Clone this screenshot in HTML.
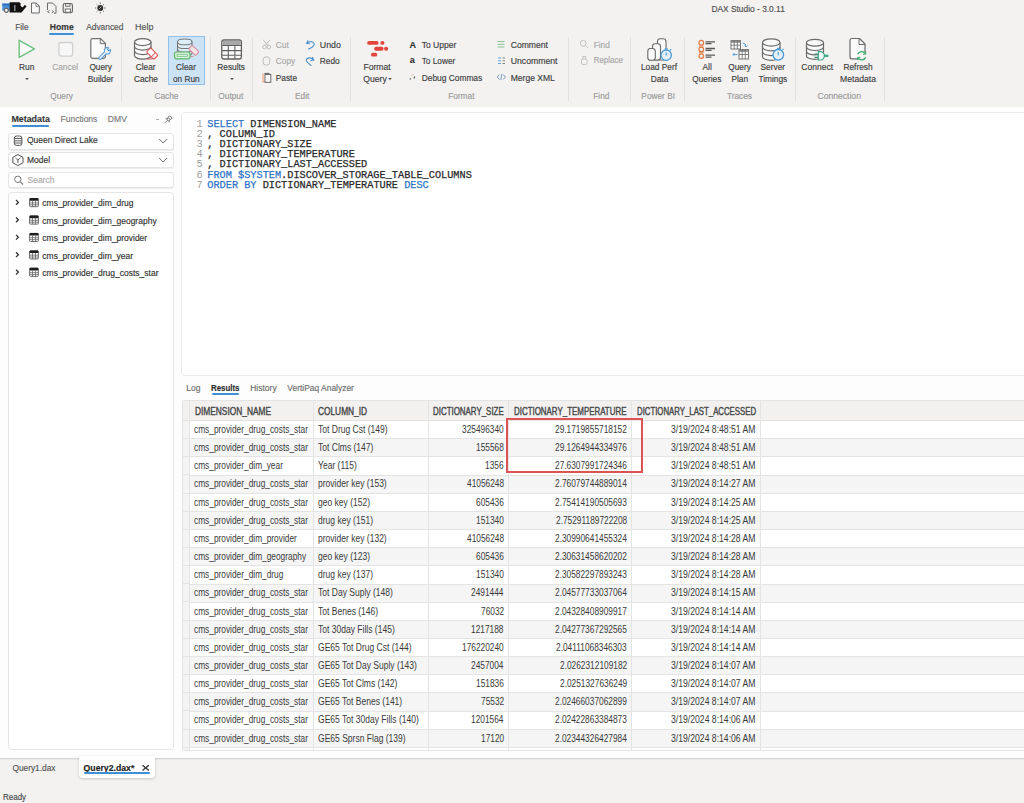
<!DOCTYPE html><html><head><meta charset="utf-8"><style>
*{margin:0;padding:0;box-sizing:border-box}
html,body{width:1024px;height:803px;overflow:hidden}
body{position:relative;background:#f3f2f1;font-family:"Liberation Sans",sans-serif;color:#3b3b3b;font-size:8.3px}
.a{position:absolute}
.t{position:absolute;white-space:nowrap;line-height:12px;font-size:8.3px;color:#404040;transform:scaleY(1.07);transform-origin:50% 50%;-webkit-text-stroke:0.15px currentColor}
.c{text-align:center}
.dis{color:#a8a8a8}
.grp{color:#9a9a9a}
.sep{position:absolute;width:1px;background:#e2e1e0;top:37px;height:64px}
svg{position:absolute;overflow:visible}
.code{position:absolute;font-family:"Liberation Mono",monospace;font-size:10.25px;-webkit-text-stroke:0.25px currentColor;line-height:10.17px;white-space:pre;color:#2a2a2a}
.ln{color:#a0a0a0;-webkit-text-stroke:0}
.kw{color:#3174c6}
.g{position:absolute;white-space:nowrap;font-size:8.3px;line-height:12px;color:#3a3a3a}
.r{text-align:right}
</style></head><body><div id="w" style="position:absolute;left:0;top:0;width:1024px;height:803px">
<svg style="left:0;top:0" width="110" height="16" viewBox="0 0 110 16">
<rect x="2.3" y="3.6" width="7.5" height="7" fill="#4a90d9"/>
<rect x="2.3" y="3.6" width="7.5" height="2" fill="#2f6fc0"/>
<circle cx="6.3" cy="10.3" r="2" fill="#fff" stroke="#666" stroke-width="1.2"/>
<path d="M9.6 2.3 H19.5 L20.5 3.5 V12.5 H9.6 Z" fill="#111"/>
<rect x="14.2" y="5" width="1.2" height="6" fill="#aaa"/>
<path d="M20 5.5 L22.5 7.5 L25 4.8 L26.5 6.5 L24 9.5 L21.5 12.5 L20 12.5 Z" fill="#111"/>
<path d="M31.5 3 H36.3 L39.3 6 V13 H31.5 Z" fill="#f7f7f7" stroke="#6b6b6b" stroke-width="1"/>
<path d="M36 3 V6.3 H39.3" fill="none" stroke="#6b6b6b" stroke-width="0.8"/>
<path d="M47.5 10 V3 H52.5 L56 6.5 V13.2 H54" fill="none" stroke="#6b6b6b" stroke-width="1"/>
<path d="M49.5 10.5 L47.5 11.8 L49.5 13 M51.8 10.5 L53.7 11.8 L51.8 13" fill="none" stroke="#6b6b6b" stroke-width="0.9"/>
<rect x="63.2" y="3.5" width="9.2" height="9.2" rx="1.8" fill="none" stroke="#5f5f5f" stroke-width="1.1"/>
<rect x="65.7" y="3.6" width="4.3" height="2.6" fill="none" stroke="#5f5f5f" stroke-width="0.9"/>
<rect x="65.2" y="9" width="5.2" height="3.2" fill="#fff" stroke="#5f5f5f" stroke-width="0.9"/>
<circle cx="100.3" cy="8" r="2.9" fill="#2b2b2b"/>
<path d="M99.2 8.8 L101.3 6.8" stroke="#eee" stroke-width="0.8"/>
<g stroke="#555" stroke-width="0.9">
<path d="M100.3 2.6 V4 M100.3 12 V13.4 M95 8 H96.4 M104.2 8 H105.6 M96.6 4.3 L97.5 5.2 M103.1 10.8 L104 11.7 M96.6 11.7 L97.5 10.8 M103.1 5.2 L104 4.3"/>
</g>
</svg>
<div class="t " style="left:711.4px;top:3.3px;color:#505050;font-size:8.4px">DAX Studio - 3.0.11</div>
<div class="t " style="left:15.2px;top:21.1px;color:#555">File</div>
<div class="t " style="left:49.8px;top:21.1px;font-weight:bold;color:#363636;font-size:8.6px">Home</div>
<div class="a" style="left:49.3px;top:32.6px;width:25px;height:2.4px;background:#3d8fd6;border-radius:1px"></div>
<div class="t " style="left:86.2px;top:21.1px;color:#555;font-size:8.4px">Advanced</div>
<div class="t " style="left:135px;top:21.1px;color:#555;font-size:9px">Help</div>
<div class="sep" style="left:121px"></div>
<div class="sep" style="left:210.3px"></div>
<div class="sep" style="left:252px"></div>
<div class="sep" style="left:350.2px"></div>
<div class="sep" style="left:568px"></div>
<div class="sep" style="left:630px"></div>
<div class="sep" style="left:684px"></div>
<div class="sep" style="left:795px"></div>
<div class="sep" style="left:883.5px"></div>
<svg style="left:0;top:0" width="1" height="1">
<path d="M19.2 40.3 L34.5 48.8 L19.2 57.3 Z" fill="#fafafa" stroke="#6cc07b" stroke-width="1.4" stroke-linejoin="round"/>
<rect x="59" y="42.5" width="13.6" height="13.6" rx="2" fill="#f7f7f7" stroke="#cfcfcf" stroke-width="1.3"/>
<path d="M92.6 38.6 H100.6 L105.4 43.4 V56.6 A1.8 1.8 0 0 1 103.6 58.4 H92.6 A1.8 1.8 0 0 1 90.8 56.6 V40.4 A1.8 1.8 0 0 1 92.6 38.6 Z" fill="#fbfbfb" stroke="#707070" stroke-width="1.2" stroke-linejoin="round"/>
<path d="M100.3 38.8 V43.6 H105.2" fill="none" stroke="#707070" stroke-width="1"/>
<g transform="translate(107.5 50.7) rotate(45)">
<path d="M-1.3 10.5 V2.92 A3.2 3.2 0 0 1 -1.1 -3.0 V-0.8 H1.1 V-3.0 A3.2 3.2 0 0 1 1.3 2.92 V10.5 A1.3 1.3 0 0 1 -1.3 10.5 Z" fill="#e6f1fb" stroke="#5598d8" stroke-width="0.95" stroke-linejoin="round"/>
</g>
</svg>
<div class="t c " style="left:-13.3px;width:80px;top:61.4px;">Run</div>
<div class="a" style="left:24.8px;top:78.3px;width:0;height:0;border-left:2px solid transparent;border-right:2px solid transparent;border-top:2.4px solid #555"></div>
<div class="t c dis" style="left:25.2px;width:80px;top:61.4px;">Cancel</div>
<div class="t c " style="left:60.7px;width:80px;top:61.4px;">Query</div>
<div class="t c " style="left:60.7px;width:80px;top:73.0px;">Builder</div>
<div class="t c grp" style="left:21.5px;width:80px;top:90.0px;">Query</div>
<div class="a" style="left:168px;top:35.7px;width:37px;height:49.7px;background:#cce3f6;border:1px solid #8fc1ec"></div>
<svg style="left:0;top:0" width="1" height="1"><g fill="#fafafa" stroke="#6a6a6a" stroke-width="1.2">
<path d="M134.5 42.085 V55.615 A8.25 3.4850000000000003 0 0 0 151.0 55.615 V42.085"/>
<ellipse cx="142.75" cy="42.085" rx="8.25" ry="3.4850000000000003"/>
<path d="M134.5 46.595 A8.25 3.4850000000000003 0 0 0 151.0 46.595 M134.5 51.105000000000004 A8.25 3.4850000000000003 0 0 0 151.0 51.105000000000004" fill="none"/>
</g><g transform="translate(152.2 53.6) rotate(-45)"><rect x="-3" y="-5.2" width="6" height="10.4" rx="1.2" fill="#fff" stroke="#e0585a" stroke-width="1.2"/><path d="M-3 1.6 H3" stroke="#e0585a" stroke-width="1"/></g><path d="M147 59 H152" stroke="#e0585a" stroke-width="1"/><g fill="#dfeefb" stroke="#7a7a7a" stroke-width="1.1">
<path d="M177.5 41.89 V53.11 A7.25 2.89 0 0 0 192.0 53.11 V41.89"/>
<ellipse cx="184.75" cy="41.89" rx="7.25" ry="2.89"/>
<path d="M177.5 45.63 A7.25 2.89 0 0 0 192.0 45.63 M177.5 49.37 A7.25 2.89 0 0 0 192.0 49.37" fill="none"/>
</g><g transform="translate(193.8 50.3) rotate(-45)"><rect x="-2.6" y="-4.8" width="5.2" height="9.6" rx="1" fill="#f4e4e8" stroke="#d98896" stroke-width="1"/></g>
<path d="M189 56.5 H193.5" stroke="#d98896" stroke-width="0.9"/>
<rect x="174.5" y="52" width="15.5" height="6.8" rx="2" fill="#d8f0dc" stroke="#5bb56a" stroke-width="1.2"/>
<rect x="177" y="54.2" width="10.5" height="2.4" fill="none" stroke="#5bb56a" stroke-width="0.6"/>
</svg>
<div class="t c " style="left:105.7px;width:80px;top:61.4px;">Clear</div>
<div class="t c " style="left:106.0px;width:80px;top:73.0px;">Cache</div>
<div class="t c " style="left:146.0px;width:80px;top:61.4px;">Clear</div>
<div class="t c " style="left:146.3px;width:80px;top:73.0px;">on Run</div>
<div class="t c grp" style="left:126.5px;width:80px;top:90.0px;">Cache</div>
<svg style="left:0;top:0" width="1" height="1">
<rect x="221.8" y="40" width="19.6" height="19" rx="2.2" fill="#fafafa" stroke="#626262" stroke-width="1.3"/>
<rect x="222.5" y="40.7" width="18.2" height="4.5" fill="#a8a8a8"/>
<path d="M221.8 45.5 H241.4 M221.8 50.6 H241.4 M221.8 55.3 H241.4 M228.3 45.5 V59 M234.9 45.5 V59" stroke="#626262" stroke-width="1.1" fill="none"/>
</svg>
<div class="t c " style="left:191.2px;width:80px;top:61.4px;">Results</div>
<div class="a" style="left:229.5px;top:78.3px;width:0;height:0;border-left:2px solid transparent;border-right:2px solid transparent;border-top:2.4px solid #555"></div>
<div class="t c grp" style="left:190.8px;width:80px;top:90.0px;">Output</div>
<svg style="left:0;top:0" width="1" height="1">
<g stroke="#bdbdbd" stroke-width="1" fill="none">
<circle cx="264.5" cy="47" r="1.8"/><circle cx="268.8" cy="47" r="1.8"/>
<path d="M263.2 39.8 L268 45.5 M270 39.8 L265.3 45.5"/>
<rect x="263.2" y="57" width="6.5" height="8" rx="2.5"/>
</g>
<path d="M263 73.5 V82 H270.5" fill="none" stroke="#f0a070" stroke-width="1.1"/>
<rect x="265" y="74.5" width="5.8" height="7.8" fill="#fafafa" stroke="#6a6a6a" stroke-width="1"/>
<path d="M264.5 73.5 H269.5" stroke="#6a6a6a" stroke-width="1.2"/>
<path d="M308 40.8 L306.5 43.3 L309.5 43.8 M306.8 43.2 C311 40 315.5 42.5 313.8 45.5 C312.8 47.2 310.5 48.3 308.5 49" fill="none" stroke="#4a90d0" stroke-width="1.1" stroke-linecap="round"/>
<path d="M312.5 57.5 L313.8 60 L310.8 60.5 M313.5 60 C310 56 304.5 58.5 306.8 61.5 C308 63 309.5 64.5 311 65.5" fill="none" stroke="#4a90d0" stroke-width="1.1" stroke-linecap="round"/>
</svg>
<div class="t dis" style="left:275.8px;top:38.6px;">Cut</div>
<div class="t dis" style="left:275.8px;top:55.1px;">Copy</div>
<div class="t " style="left:275.8px;top:71.5px;">Paste</div>
<div class="t " style="left:319.8px;top:38.6px;font-size:8.8px">Undo</div>
<div class="t " style="left:319.8px;top:55.1px;">Redo</div>
<div class="t c grp" style="left:262.2px;width:80px;top:90.0px;">Edit</div>
<svg style="left:0;top:0" width="1" height="1">
<g stroke="#e2453c" stroke-width="3.9" stroke-linecap="round" fill="none">
<path d="M369.1 42.9 H376.6"/><path d="M382.3 42.9 H382.5"/>
<path d="M376.1 48.7 H381.6"/><path d="M386 48.7 H386.2"/>
<path d="M372.9 54.65 H375.3"/>
</g>
</svg>
<div class="t c " style="left:337.0px;width:80px;top:61.4px;font-size:8.6px">Format</div>
<div class="t " style="left:363.3px;top:73.0px;font-size:8.6px">Query</div>
<div class="a" style="left:388.3px;top:78.3px;width:0;height:0;border-left:2px solid transparent;border-right:2px solid transparent;border-top:2.6px solid #555"></div>
<div class="t " style="left:409.5px;top:38.6px;font-weight:bold;color:#333;font-size:9px">A</div>
<div class="t " style="left:409.8px;top:54.1px;font-weight:bold;color:#333;font-size:9px">a</div>
<svg style="left:0;top:0" width="1" height="1">
<path d="M410 79.5 L410.6 78.2 M414 78.5 L414.8 76.5" stroke="#555" stroke-width="1.1"/>
<path d="M412 75.5 L413 74.5" stroke="#d08030" stroke-width="0.9"/>
</svg>
<div class="t " style="left:421.7px;top:38.6px;font-size:8.55px">To Upper</div>
<div class="t " style="left:421.7px;top:55.1px;font-size:8.3px">To Lower</div>
<div class="t " style="left:421.7px;top:71.5px;font-size:8.4px">Debug Commas</div>
<div class="t c grp" style="left:421.3px;width:80px;top:90.0px;">Format</div>
<svg style="left:0;top:0" width="1" height="1">
<g stroke-width="0.9" fill="none">
<path d="M497.5 41.5 H504.5 M497.5 44.3 H504.5 M497.5 47 H504.5" stroke="#7dbb85"/>
<path d="M498 58 L501 58 M498 60.8 H501 M498 63.5 L501 63.5" stroke="#5a9ad8"/>
<path d="M502.5 58 H505 M502.5 60.8 H505 M502.5 63.5 H505" stroke="#777"/>
<path d="M499.5 74.5 L497.3 77 L499.5 79.5 M503.2 74.5 L505.4 77 L503.2 79.5 M501.8 74 L500.8 80" stroke="#6a8fb8"/>
</g>
</svg>
<div class="t " style="left:510.7px;top:38.6px;font-size:8.6px">Comment</div>
<div class="t " style="left:510.7px;top:55.1px;font-size:8.7px">Uncomment</div>
<div class="t " style="left:510.7px;top:71.5px;font-size:8.55px">Merge XML</div>
<svg style="left:0;top:0" width="1" height="1">
<g stroke="#c2c2c2" stroke-width="1" fill="none">
<circle cx="583.2" cy="43.3" r="2.9"/><path d="M585.3 45.4 L588 48.1"/>
<rect x="581.5" y="59" width="5.5" height="5.5" rx="1.5"/><path d="M582.8 59 V56.5 H585.7 V59"/>
</g>
</svg>
<div class="t dis" style="left:593.7px;top:38.6px;">Find</div>
<div class="t dis" style="left:593.7px;top:55.1px;font-size:7.95px">Replace</div>
<div class="t c grp" style="left:561.3px;width:80px;top:90.0px;">Find</div>
<svg style="left:0;top:0" width="1" height="1">
<g fill="#fafafa" stroke="#6a6a6a" stroke-width="1.1">
<rect x="657.5" y="38.7" width="8.5" height="21.3" rx="2.8"/>
<rect x="652.5" y="43.8" width="8" height="16.3" rx="2.8"/>
<rect x="647.8" y="48.5" width="7.5" height="11.8" rx="2.8"/>
</g>
<circle cx="666.2" cy="55.2" r="5.2" fill="#e3f0fb" stroke="#4b9ad9" stroke-width="1.3"/>
<path d="M666.2 52.5 V55.5" stroke="#4b9ad9" stroke-width="1.1"/>
<path d="M664.8 48.9 H667.6 M670.2 50.3 L671.3 49.2" stroke="#4b9ad9" stroke-width="1.1"/>
</svg>
<div class="t c " style="left:619.0px;width:80px;top:61.4px;">Load Perf</div>
<div class="t c " style="left:619.5px;width:80px;top:73.0px;">Data</div>
<div class="t c grp" style="left:618.2px;width:80px;top:90.0px;">Power BI</div>
<svg style="left:0;top:0" width="1" height="1">
<g fill="none" stroke="#e07b45" stroke-width="1.2">
<circle cx="701.3" cy="42.7" r="2.3"/><circle cx="701.3" cy="49.4" r="2.3"/><circle cx="701.3" cy="56.1" r="2.3"/>
<path d="M699 46 H703.6 M699 52.7 H703.6" stroke-width="0.9"/>
</g>
<g stroke="#5a5a5a" stroke-width="1.3">
<path d="M705.5 41.8 H715 M705.5 43.7 H711.5 M705.5 48.5 H715 M705.5 50.4 H711.5 M705.5 55.2 H715 M705.5 57.1 H711.5"/>
</g>
<g fill="#fafafa" stroke="#6a6a6a" stroke-width="0.9">
<rect x="731" y="40.5" width="9.5" height="8.5"/>
<rect x="739" y="49.5" width="9.5" height="9.5"/>
</g>
<rect x="731" y="40.5" width="9.5" height="2.3" fill="#8a8a8a"/>
<rect x="739" y="49.5" width="9.5" height="2.3" fill="#8a8a8a"/>
<path d="M731 45.2 H740.5 M734.2 40.5 V49 M737.3 40.5 V49 M739 54.5 H748.5 M742.2 49.5 V59 M745.3 49.5 V59" stroke="#6a6a6a" stroke-width="0.8"/>
<path d="M742.5 43 Q746 43 746 46.5 M744.5 45.5 L746 47 L747.5 45.5" fill="none" stroke="#4b9ad9" stroke-width="0.9"/>
<path d="M737.5 54.5 H733 M734.5 53 L733 54.5 L734.5 56" fill="none" stroke="#4b9ad9" stroke-width="0.9"/>
</svg>
<div class="t c " style="left:667.2px;width:80px;top:61.4px;">All</div>
<div class="t c " style="left:666.8px;width:80px;top:73.0px;">Queries</div>
<div class="t c " style="left:699.6px;width:80px;top:61.4px;">Query</div>
<div class="t c " style="left:699.8px;width:80px;top:73.0px;">Plan</div>
<svg style="left:0;top:0" width="1" height="1"><g fill="#fafafa" stroke="#6a6a6a" stroke-width="1.2">
<path d="M762.5 42.455 V56.644999999999996 A8.75 3.6550000000000002 0 0 0 780.0 56.644999999999996 V42.455"/>
<ellipse cx="771.25" cy="42.455" rx="8.75" ry="3.6550000000000002"/>
<path d="M762.5 47.184999999999995 A8.75 3.6550000000000002 0 0 0 780.0 47.184999999999995 M762.5 51.915 A8.75 3.6550000000000002 0 0 0 780.0 51.915" fill="none"/>
</g>
<circle cx="778.3" cy="54.8" r="5.3" fill="#e3f0fb" stroke="#4b9ad9" stroke-width="1.3"/>
<path d="M778.3 52 V55.2" stroke="#4b9ad9" stroke-width="1.1"/>
<path d="M776.9 48.4 H779.7 M782.4 49.9 L783.5 48.8" stroke="#4b9ad9" stroke-width="1.1"/>
</svg>
<div class="t c " style="left:732.8px;width:80px;top:61.4px;">Server</div>
<div class="t c " style="left:732.8px;width:80px;top:73.0px;">Timings</div>
<div class="t c grp" style="left:699.5px;width:80px;top:90.0px;">Traces</div>
<svg style="left:0;top:0" width="1" height="1"><g fill="#fafafa" stroke="#6a6a6a" stroke-width="1.2">
<path d="M806.5 42.699999999999996 V55.89999999999999 A8.5 3.4000000000000004 0 0 0 823.5 55.89999999999999 V42.699999999999996"/>
<ellipse cx="815.0" cy="42.699999999999996" rx="8.5" ry="3.4000000000000004"/>
<path d="M806.5 47.099999999999994 A8.5 3.4000000000000004 0 0 0 823.5 47.099999999999994 M806.5 51.5 A8.5 3.4000000000000004 0 0 0 823.5 51.5" fill="none"/>
</g>
<path d="M823.5 55.8 H828.4" stroke="#3aa98a" stroke-width="2.3"/>
<path d="M818.3 51.6 H820.2 A4.2 4.2 0 0 1 820.2 60 H818.3 Z" fill="#eef8f4" stroke="#3aa98a" stroke-width="1.2"/>
<path d="M814.3 54.2 H818.3 M814.3 57.4 H818.3" stroke="#3d8f73" stroke-width="1.3"/>
<path d="M852 38.5 H859.5 L865 44 V56.8 A2 2 0 0 1 863 58.8 H852 A2 2 0 0 1 850 56.8 V40.5 A2 2 0 0 1 852 38.5 Z" fill="#fafafa" stroke="#6a6a6a" stroke-width="1.2" stroke-linejoin="round"/>
<path d="M859 38.5 V44.5 H865" fill="none" stroke="#6a6a6a" stroke-width="1"/>
<circle cx="861.7" cy="55.8" r="4.3" fill="#fafafa" stroke="none"/>
<path d="M857.8 54.3 A4 4 0 0 1 865 53.5 M865.6 57.3 A4 4 0 0 1 858.4 58" fill="none" stroke="#3aab6a" stroke-width="1.3"/>
<path d="M865.7 51.5 V54.2 H863" fill="none" stroke="#3aab6a" stroke-width="1"/>
<path d="M857.7 60 V57.3 H860.4" fill="none" stroke="#3aab6a" stroke-width="1"/>
</svg>
<div class="t c " style="left:777.2px;width:80px;top:61.4px;font-size:8.5px">Connect</div>
<div class="t c " style="left:818.0px;width:80px;top:61.4px;">Refresh</div>
<div class="t c " style="left:818.0px;width:80px;top:73.0px;font-size:8.6px">Metadata</div>
<div class="t c grp" style="left:799.2px;width:80px;top:90.0px;font-size:8.6px">Connection</div>
<div class="a" style="left:0;top:106.4px;width:1024px;height:651.4px;background:#fdfdfd;box-shadow:0 1px 1.5px rgba(0,0,0,0.16)"></div>
<div class="a" style="left:0;top:106.4px;width:1024px;height:1.5px;background:linear-gradient(#f1f0ef,#fdfdfd)"></div>
<div class="t " style="left:11.4px;top:113.0px;font-weight:bold;color:#3a3a3a;font-size:8.9px">Metadata</div>
<div class="a" style="left:12px;top:125.2px;width:37px;height:2.3px;background:#3d8fd6;border-radius:1px"></div>
<div class="t " style="left:60.5px;top:113.0px;color:#7a7a7a;font-size:8.5px">Functions</div>
<div class="t " style="left:107.8px;top:113.0px;color:#7a7a7a;font-size:8.6px">DMV</div>
<div class="a" style="left:155.5px;top:118.6px;width:3.8px;height:0.9px;background:#aaa"></div>
<svg style="left:0;top:0" width="1" height="1">
<g transform="translate(167.6 120.2) rotate(45)" fill="none" stroke="#6a6a6a" stroke-width="0.9" stroke-linejoin="round">
<path d="M-1.7 -4.6 H1.7 V-2.3 H-1.7 Z"/>
<path d="M-1.1 -2.3 L-1.5 -0.2 M1.1 -2.3 L1.5 -0.2"/>
<path d="M-3 -0.1 H3"/>
<path d="M0 0 V3.6" stroke-width="0.8"/>
</g>
</svg>
<div class="a" style="left:8.4px;top:133px;width:165.6px;height:16.8px;border:1px solid #e4e4e4;border-radius:3px;background:#fff;box-shadow:0 1px 1px rgba(0,0,0,0.07)"></div>
<div class="a" style="left:8.4px;top:151.7px;width:165.6px;height:16.8px;border:1px solid #e4e4e4;border-radius:3px;background:#fff;box-shadow:0 1px 1px rgba(0,0,0,0.07)"></div>
<div class="a" style="left:8.4px;top:171.9px;width:165.6px;height:15.9px;border:1px solid #e4e4e4;border-radius:3px;background:#fff;box-shadow:0 1px 1px rgba(0,0,0,0.07)"></div>
<svg style="left:0;top:0" width="1" height="1">
<g fill="#fafafa" stroke="#555" stroke-width="1">
<rect x="14.3" y="136" width="7.6" height="9.4" rx="2.2"/>
</g>
<path d="M14.3 138.5 H21.9 M14.3 140.8 H21.9 M14.3 143 H21.9" stroke="#555" stroke-width="0.9"/>
<path d="M17.9 154.5 L23 157.3 V162.8 L17.9 165.6 L12.8 162.8 V157.3 Z" fill="#fafafa" stroke="#555" stroke-width="1"/>
<path d="M15.5 158 L17.9 160 L20.3 158 M17.9 160 V163" fill="none" stroke="#555" stroke-width="0.9"/>
<path d="M159.2 139 L163.2 143 L167.2 139 M159.2 158 L163.2 162 L167.2 158" fill="none" stroke="#666" stroke-width="1"/>
<circle cx="17.8" cy="179.3" r="3.2" fill="none" stroke="#777" stroke-width="1"/>
<path d="M20.1 181.6 L23 184.5" stroke="#777" stroke-width="1.1"/>
</svg>
<div class="t " style="left:26.9px;top:134.3px;color:#333;font-size:8.5px">Queen Direct Lake</div>
<div class="t " style="left:26.9px;top:153.5px;color:#333;font-size:8.5px">Model</div>
<div class="t " style="left:27.5px;top:174.2px;color:#aaa;font-size:8.5px">Search</div>
<div class="a" style="left:8.4px;top:192.3px;width:165.6px;height:557.5px;border:1px solid #e6e6e6;border-radius:4px;background:#fff"></div>
<svg style="left:0;top:0" width="1" height="1"><path d="M16 200.00 L18.4 202.40 L16 204.80" fill="none" stroke="#333" stroke-width="1.3"/><rect x="29.6" y="198.50" width="8.8" height="8.2" rx="1" fill="#fafafa" stroke="#5a5a5a" stroke-width="0.9"/><rect x="29.6" y="198.10" width="8.8" height="2.6" rx="0.8" fill="#1e1e1e"/><path d="M29.6 202.90 H38.4 M29.6 204.80 H38.4 M32.5 200.70 V206.70 M35.5 200.70 V206.70" stroke="#5a5a5a" stroke-width="0.7"/><path d="M16 217.43 L18.4 219.83 L16 222.23" fill="none" stroke="#333" stroke-width="1.3"/><rect x="29.6" y="215.93" width="8.8" height="8.2" rx="1" fill="#fafafa" stroke="#5a5a5a" stroke-width="0.9"/><rect x="29.6" y="215.53" width="8.8" height="2.6" rx="0.8" fill="#1e1e1e"/><path d="M29.6 220.33 H38.4 M29.6 222.23 H38.4 M32.5 218.13 V224.13 M35.5 218.13 V224.13" stroke="#5a5a5a" stroke-width="0.7"/><path d="M16 234.86 L18.4 237.26 L16 239.66" fill="none" stroke="#333" stroke-width="1.3"/><rect x="29.6" y="233.36" width="8.8" height="8.2" rx="1" fill="#fafafa" stroke="#5a5a5a" stroke-width="0.9"/><rect x="29.6" y="232.96" width="8.8" height="2.6" rx="0.8" fill="#1e1e1e"/><path d="M29.6 237.76 H38.4 M29.6 239.66 H38.4 M32.5 235.56 V241.56 M35.5 235.56 V241.56" stroke="#5a5a5a" stroke-width="0.7"/><path d="M16 252.29 L18.4 254.69 L16 257.09" fill="none" stroke="#333" stroke-width="1.3"/><rect x="29.6" y="250.79" width="8.8" height="8.2" rx="1" fill="#fafafa" stroke="#5a5a5a" stroke-width="0.9"/><rect x="29.6" y="250.39" width="8.8" height="2.6" rx="0.8" fill="#1e1e1e"/><path d="M29.6 255.19 H38.4 M29.6 257.09 H38.4 M32.5 252.99 V258.99 M35.5 252.99 V258.99" stroke="#5a5a5a" stroke-width="0.7"/><path d="M16 269.72 L18.4 272.12 L16 274.52" fill="none" stroke="#333" stroke-width="1.3"/><rect x="29.6" y="268.22" width="8.8" height="8.2" rx="1" fill="#fafafa" stroke="#5a5a5a" stroke-width="0.9"/><rect x="29.6" y="267.82" width="8.8" height="2.6" rx="0.8" fill="#1e1e1e"/><path d="M29.6 272.62 H38.4 M29.6 274.52 H38.4 M32.5 270.42 V276.42 M35.5 270.42 V276.42" stroke="#5a5a5a" stroke-width="0.7"/></svg>
<div class="t " style="left:42.3px;top:197.2px;color:#333;font-size:8.5px">cms_provider_dim_drug</div>
<div class="t " style="left:42.3px;top:214.6px;color:#333;font-size:8.5px">cms_provider_dim_geography</div>
<div class="t " style="left:42.3px;top:232.1px;color:#333;font-size:8.5px">cms_provider_dim_provider</div>
<div class="t " style="left:42.3px;top:249.5px;color:#333;font-size:8.5px">cms_provider_dim_year</div>
<div class="t " style="left:42.3px;top:266.9px;color:#333;font-size:8.5px">cms_provider_drug_costs_star</div>
<div class="a" style="left:181.4px;top:112.3px;width:860px;height:263.4px;border:1px solid #ebebeb;border-radius:4px;background:#fff"></div>
<div class="code ln" style="left:196.6px;top:118.8px">1
2
3
4
5
6
7</div>
<div class="code" style="left:207.3px;top:118.8px"><span class="kw">SELECT</span> DIMENSION_NAME
, COLUMN_ID
, DICTIONARY_SIZE
, DICTIONARY_TEMPERATURE
, DICTIONARY_LAST_ACCESSED
<span class="kw">FROM $SYSTEM</span>.DISCOVER_STORAGE_TABLE_COLUMNS
<span class="kw">ORDER BY</span> DICTIONARY_TEMPERATURE <span class="kw">DESC</span></div>
<div class="t " style="left:186.3px;top:382.2px;color:#6e6e6e;font-size:8.5px">Log</div>
<div class="t " style="left:211.1px;top:382.2px;font-weight:bold;color:#2e2e2e;font-size:8.5px;transform:scaleX(0.9249);transform-origin:0 0">Results</div>
<div class="a" style="left:212px;top:393.3px;width:26.5px;height:2.2px;background:#3d8fd6;border-radius:1px"></div>
<div class="t " style="left:250.2px;top:382.2px;color:#6e6e6e;font-size:8.5px">History</div>
<div class="t " style="left:287.3px;top:382.2px;color:#6e6e6e;font-size:8.45px">VertiPaq Analyzer</div>
<div class="a" style="left:181.8px;top:400.1px;width:860px;height:350.50px;border:1px solid #e3e3e3;border-radius:2px;background:#fff;overflow:hidden">
<div class="a" style="left:0;top:0;width:860px;height:19.10px;background:#f2f1f0"></div><div class="a" style="left:0;top:19.10px;width:860px;height:18.15px;background:#ffffff;border-top:1px solid #e4e4e4"></div><div class="a" style="left:0;top:37.25px;width:860px;height:18.15px;background:#f5f5f5;border-top:1px solid #e4e4e4"></div><div class="a" style="left:0;top:55.40px;width:860px;height:18.15px;background:#ffffff;border-top:1px solid #e4e4e4"></div><div class="a" style="left:0;top:73.55px;width:860px;height:18.15px;background:#f5f5f5;border-top:1px solid #e4e4e4"></div><div class="a" style="left:0;top:91.70px;width:860px;height:18.15px;background:#ffffff;border-top:1px solid #e4e4e4"></div><div class="a" style="left:0;top:109.85px;width:860px;height:18.15px;background:#f5f5f5;border-top:1px solid #e4e4e4"></div><div class="a" style="left:0;top:128.00px;width:860px;height:18.15px;background:#ffffff;border-top:1px solid #e4e4e4"></div><div class="a" style="left:0;top:146.15px;width:860px;height:18.15px;background:#f5f5f5;border-top:1px solid #e4e4e4"></div><div class="a" style="left:0;top:164.30px;width:860px;height:18.15px;background:#ffffff;border-top:1px solid #e4e4e4"></div><div class="a" style="left:0;top:182.45px;width:860px;height:18.15px;background:#f5f5f5;border-top:1px solid #e4e4e4"></div><div class="a" style="left:0;top:200.60px;width:860px;height:18.15px;background:#ffffff;border-top:1px solid #e4e4e4"></div><div class="a" style="left:0;top:218.75px;width:860px;height:18.15px;background:#f5f5f5;border-top:1px solid #e4e4e4"></div><div class="a" style="left:0;top:236.90px;width:860px;height:18.15px;background:#ffffff;border-top:1px solid #e4e4e4"></div><div class="a" style="left:0;top:255.05px;width:860px;height:18.15px;background:#f5f5f5;border-top:1px solid #e4e4e4"></div><div class="a" style="left:0;top:273.20px;width:860px;height:18.15px;background:#ffffff;border-top:1px solid #e4e4e4"></div><div class="a" style="left:0;top:291.35px;width:860px;height:18.15px;background:#f5f5f5;border-top:1px solid #e4e4e4"></div><div class="a" style="left:0;top:309.50px;width:860px;height:18.15px;background:#ffffff;border-top:1px solid #e4e4e4"></div><div class="a" style="left:0;top:327.65px;width:860px;height:18.15px;background:#f5f5f5;border-top:1px solid #e4e4e4"></div><div class="a" style="left:0;top:345.80px;width:860px;height:18.15px;background:#ffffff;border-top:1px solid #e4e4e4"></div><div class="a" style="left:0;top:19.10px;width:6.30px;height:400px;background:repeating-linear-gradient(to bottom,#e4e4e4 0,#e4e4e4 1px,#f4f4f4 1px,#f4f4f4 18.15px)"></div><div class="a" style="left:6.30px;top:0;width:1px;height:400px;background:#e4e4e4"></div><div class="a" style="left:129.80px;top:0;width:1px;height:400px;background:#e4e4e4"></div><div class="a" style="left:244.80px;top:0;width:1px;height:400px;background:#e4e4e4"></div><div class="a" style="left:325.70px;top:0;width:1px;height:400px;background:#e4e4e4"></div><div class="a" style="left:448.20px;top:0;width:1px;height:400px;background:#e4e4e4"></div><div class="a" style="left:577.30px;top:0;width:1px;height:400px;background:#e4e4e4"></div>
</div>
<div class="g" style="left:194.90px;top:406.00px;font-size:9.2px;font-weight:normal;color:#474747;transform:scale(0.9077,1.12);transform-origin:0 50%;-webkit-text-stroke:0.35px currentColor;">DIMENSION_NAME</div>
<div class="g" style="left:318.30px;top:406.00px;font-size:9.2px;font-weight:normal;color:#474747;transform:scale(0.9062,1.12);transform-origin:0 50%;-webkit-text-stroke:0.35px currentColor;">COLUMN_ID</div>
<div class="g" style="left:433.20px;top:406.00px;font-size:9.2px;font-weight:normal;color:#474747;transform:scale(0.8620,1.12);transform-origin:0 50%;-webkit-text-stroke:0.35px currentColor;">DICTIONARY_SIZE</div>
<div class="g" style="left:514.20px;top:406.00px;font-size:9.2px;font-weight:normal;color:#474747;transform:scale(0.8627,1.12);transform-origin:0 50%;-webkit-text-stroke:0.35px currentColor;">DICTIONARY_TEMPERATURE</div>
<div class="g" style="left:636.70px;top:406.00px;font-size:9.2px;font-weight:normal;color:#474747;transform:scale(0.8488,1.12);transform-origin:0 50%;-webkit-text-stroke:0.35px currentColor;">DICTIONARY_LAST_ACCESSED</div>
<div class="g" style="left:193.90px;top:424.00px;font-size:9.6px;font-weight:normal;color:#3a3a3a;transform:scale(0.8685,1.08);transform-origin:0 50%;">cms_provider_drug_costs_star</div>
<div class="g" style="left:318.30px;top:424.00px;font-size:9.6px;font-weight:normal;color:#3a3a3a;transform:scale(0.8887,1.08);transform-origin:0 50%;">Tot Drug Cst (149)</div>
<div class="g" style="left:462.17px;top:424.00px;font-size:9.6px;font-weight:normal;color:#3a3a3a;transform:scale(0.8685,1.08);transform-origin:0 50%;">325496340</div>
<div class="g" style="left:554.93px;top:424.00px;font-size:9.6px;font-weight:normal;color:#3a3a3a;transform:scale(0.8685,1.08);transform-origin:0 50%;">29.1719855718152</div>
<div class="g" style="left:671.30px;top:424.00px;font-size:9.6px;font-weight:normal;color:#3a3a3a;transform:scale(0.9005,1.08);transform-origin:0 50%;">3/19/2024 8:48:51 AM</div>
<div class="g" style="left:193.90px;top:442.15px;font-size:9.6px;font-weight:normal;color:#3a3a3a;transform:scale(0.8685,1.08);transform-origin:0 50%;">cms_provider_drug_costs_star</div>
<div class="g" style="left:318.30px;top:442.15px;font-size:9.6px;font-weight:normal;color:#3a3a3a;transform:scale(0.8887,1.08);transform-origin:0 50%;">Tot Clms (147)</div>
<div class="g" style="left:476.08px;top:442.15px;font-size:9.6px;font-weight:normal;color:#3a3a3a;transform:scale(0.8685,1.08);transform-origin:0 50%;">155568</div>
<div class="g" style="left:554.93px;top:442.15px;font-size:9.6px;font-weight:normal;color:#3a3a3a;transform:scale(0.8685,1.08);transform-origin:0 50%;">29.1264944334976</div>
<div class="g" style="left:671.30px;top:442.15px;font-size:9.6px;font-weight:normal;color:#3a3a3a;transform:scale(0.9005,1.08);transform-origin:0 50%;">3/19/2024 8:48:51 AM</div>
<div class="g" style="left:193.90px;top:460.30px;font-size:9.6px;font-weight:normal;color:#3a3a3a;transform:scale(0.8685,1.08);transform-origin:0 50%;">cms_provider_dim_year</div>
<div class="g" style="left:318.30px;top:460.30px;font-size:9.6px;font-weight:normal;color:#3a3a3a;transform:scale(0.8887,1.08);transform-origin:0 50%;">Year (115)</div>
<div class="g" style="left:485.35px;top:460.30px;font-size:9.6px;font-weight:normal;color:#3a3a3a;transform:scale(0.8685,1.08);transform-origin:0 50%;">1356</div>
<div class="g" style="left:554.93px;top:460.30px;font-size:9.6px;font-weight:normal;color:#3a3a3a;transform:scale(0.8685,1.08);transform-origin:0 50%;">27.6307991724346</div>
<div class="g" style="left:671.30px;top:460.30px;font-size:9.6px;font-weight:normal;color:#3a3a3a;transform:scale(0.9005,1.08);transform-origin:0 50%;">3/19/2024 8:48:51 AM</div>
<div class="g" style="left:193.90px;top:478.45px;font-size:9.6px;font-weight:normal;color:#3a3a3a;transform:scale(0.8685,1.08);transform-origin:0 50%;">cms_provider_drug_costs_star</div>
<div class="g" style="left:318.30px;top:478.45px;font-size:9.6px;font-weight:normal;color:#3a3a3a;transform:scale(0.8887,1.08);transform-origin:0 50%;">provider key (153)</div>
<div class="g" style="left:466.80px;top:478.45px;font-size:9.6px;font-weight:normal;color:#3a3a3a;transform:scale(0.8685,1.08);transform-origin:0 50%;">41056248</div>
<div class="g" style="left:554.93px;top:478.45px;font-size:9.6px;font-weight:normal;color:#3a3a3a;transform:scale(0.8685,1.08);transform-origin:0 50%;">2.76079744889014</div>
<div class="g" style="left:671.30px;top:478.45px;font-size:9.6px;font-weight:normal;color:#3a3a3a;transform:scale(0.9005,1.08);transform-origin:0 50%;">3/19/2024 8:14:27 AM</div>
<div class="g" style="left:193.90px;top:496.60px;font-size:9.6px;font-weight:normal;color:#3a3a3a;transform:scale(0.8685,1.08);transform-origin:0 50%;">cms_provider_drug_costs_star</div>
<div class="g" style="left:318.30px;top:496.60px;font-size:9.6px;font-weight:normal;color:#3a3a3a;transform:scale(0.8887,1.08);transform-origin:0 50%;">geo key (152)</div>
<div class="g" style="left:476.08px;top:496.60px;font-size:9.6px;font-weight:normal;color:#3a3a3a;transform:scale(0.8685,1.08);transform-origin:0 50%;">605436</div>
<div class="g" style="left:554.93px;top:496.60px;font-size:9.6px;font-weight:normal;color:#3a3a3a;transform:scale(0.8685,1.08);transform-origin:0 50%;">2.75414190505693</div>
<div class="g" style="left:671.30px;top:496.60px;font-size:9.6px;font-weight:normal;color:#3a3a3a;transform:scale(0.9005,1.08);transform-origin:0 50%;">3/19/2024 8:14:25 AM</div>
<div class="g" style="left:193.90px;top:514.75px;font-size:9.6px;font-weight:normal;color:#3a3a3a;transform:scale(0.8685,1.08);transform-origin:0 50%;">cms_provider_drug_costs_star</div>
<div class="g" style="left:318.30px;top:514.75px;font-size:9.6px;font-weight:normal;color:#3a3a3a;transform:scale(0.8887,1.08);transform-origin:0 50%;">drug key (151)</div>
<div class="g" style="left:476.08px;top:514.75px;font-size:9.6px;font-weight:normal;color:#3a3a3a;transform:scale(0.8685,1.08);transform-origin:0 50%;">151340</div>
<div class="g" style="left:555.55px;top:514.75px;font-size:9.6px;font-weight:normal;color:#3a3a3a;transform:scale(0.8685,1.08);transform-origin:0 50%;">2.75291189722208</div>
<div class="g" style="left:671.30px;top:514.75px;font-size:9.6px;font-weight:normal;color:#3a3a3a;transform:scale(0.9005,1.08);transform-origin:0 50%;">3/19/2024 8:14:25 AM</div>
<div class="g" style="left:193.90px;top:532.90px;font-size:9.6px;font-weight:normal;color:#3a3a3a;transform:scale(0.8685,1.08);transform-origin:0 50%;">cms_provider_dim_provider</div>
<div class="g" style="left:318.30px;top:532.90px;font-size:9.6px;font-weight:normal;color:#3a3a3a;transform:scale(0.8887,1.08);transform-origin:0 50%;">provider key (132)</div>
<div class="g" style="left:466.80px;top:532.90px;font-size:9.6px;font-weight:normal;color:#3a3a3a;transform:scale(0.8685,1.08);transform-origin:0 50%;">41056248</div>
<div class="g" style="left:554.93px;top:532.90px;font-size:9.6px;font-weight:normal;color:#3a3a3a;transform:scale(0.8685,1.08);transform-origin:0 50%;">2.30990641455324</div>
<div class="g" style="left:671.30px;top:532.90px;font-size:9.6px;font-weight:normal;color:#3a3a3a;transform:scale(0.9005,1.08);transform-origin:0 50%;">3/19/2024 8:14:28 AM</div>
<div class="g" style="left:193.90px;top:551.05px;font-size:9.6px;font-weight:normal;color:#3a3a3a;transform:scale(0.8685,1.08);transform-origin:0 50%;">cms_provider_dim_geography</div>
<div class="g" style="left:318.30px;top:551.05px;font-size:9.6px;font-weight:normal;color:#3a3a3a;transform:scale(0.8887,1.08);transform-origin:0 50%;">geo key (123)</div>
<div class="g" style="left:476.08px;top:551.05px;font-size:9.6px;font-weight:normal;color:#3a3a3a;transform:scale(0.8685,1.08);transform-origin:0 50%;">605436</div>
<div class="g" style="left:554.93px;top:551.05px;font-size:9.6px;font-weight:normal;color:#3a3a3a;transform:scale(0.8685,1.08);transform-origin:0 50%;">2.30631458620202</div>
<div class="g" style="left:671.30px;top:551.05px;font-size:9.6px;font-weight:normal;color:#3a3a3a;transform:scale(0.9005,1.08);transform-origin:0 50%;">3/19/2024 8:14:28 AM</div>
<div class="g" style="left:193.90px;top:569.20px;font-size:9.6px;font-weight:normal;color:#3a3a3a;transform:scale(0.8685,1.08);transform-origin:0 50%;">cms_provider_dim_drug</div>
<div class="g" style="left:318.30px;top:569.20px;font-size:9.6px;font-weight:normal;color:#3a3a3a;transform:scale(0.8887,1.08);transform-origin:0 50%;">drug key (137)</div>
<div class="g" style="left:476.08px;top:569.20px;font-size:9.6px;font-weight:normal;color:#3a3a3a;transform:scale(0.8685,1.08);transform-origin:0 50%;">151340</div>
<div class="g" style="left:554.93px;top:569.20px;font-size:9.6px;font-weight:normal;color:#3a3a3a;transform:scale(0.8685,1.08);transform-origin:0 50%;">2.30582297893243</div>
<div class="g" style="left:671.30px;top:569.20px;font-size:9.6px;font-weight:normal;color:#3a3a3a;transform:scale(0.9005,1.08);transform-origin:0 50%;">3/19/2024 8:14:28 AM</div>
<div class="g" style="left:193.90px;top:587.35px;font-size:9.6px;font-weight:normal;color:#3a3a3a;transform:scale(0.8685,1.08);transform-origin:0 50%;">cms_provider_drug_costs_star</div>
<div class="g" style="left:318.30px;top:587.35px;font-size:9.6px;font-weight:normal;color:#3a3a3a;transform:scale(0.8887,1.08);transform-origin:0 50%;">Tot Day Suply (148)</div>
<div class="g" style="left:471.44px;top:587.35px;font-size:9.6px;font-weight:normal;color:#3a3a3a;transform:scale(0.8685,1.08);transform-origin:0 50%;">2491444</div>
<div class="g" style="left:554.93px;top:587.35px;font-size:9.6px;font-weight:normal;color:#3a3a3a;transform:scale(0.8685,1.08);transform-origin:0 50%;">2.04577733037064</div>
<div class="g" style="left:671.30px;top:587.35px;font-size:9.6px;font-weight:normal;color:#3a3a3a;transform:scale(0.9005,1.08);transform-origin:0 50%;">3/19/2024 8:14:15 AM</div>
<div class="g" style="left:193.90px;top:605.50px;font-size:9.6px;font-weight:normal;color:#3a3a3a;transform:scale(0.8685,1.08);transform-origin:0 50%;">cms_provider_drug_costs_star</div>
<div class="g" style="left:318.30px;top:605.50px;font-size:9.6px;font-weight:normal;color:#3a3a3a;transform:scale(0.8887,1.08);transform-origin:0 50%;">Tot Benes (146)</div>
<div class="g" style="left:480.71px;top:605.50px;font-size:9.6px;font-weight:normal;color:#3a3a3a;transform:scale(0.8685,1.08);transform-origin:0 50%;">76032</div>
<div class="g" style="left:554.93px;top:605.50px;font-size:9.6px;font-weight:normal;color:#3a3a3a;transform:scale(0.8685,1.08);transform-origin:0 50%;">2.04328408909917</div>
<div class="g" style="left:671.30px;top:605.50px;font-size:9.6px;font-weight:normal;color:#3a3a3a;transform:scale(0.9005,1.08);transform-origin:0 50%;">3/19/2024 8:14:14 AM</div>
<div class="g" style="left:193.90px;top:623.65px;font-size:9.6px;font-weight:normal;color:#3a3a3a;transform:scale(0.8685,1.08);transform-origin:0 50%;">cms_provider_drug_costs_star</div>
<div class="g" style="left:318.30px;top:623.65px;font-size:9.6px;font-weight:normal;color:#3a3a3a;transform:scale(0.8887,1.08);transform-origin:0 50%;">Tot 30day Fills (145)</div>
<div class="g" style="left:471.44px;top:623.65px;font-size:9.6px;font-weight:normal;color:#3a3a3a;transform:scale(0.8685,1.08);transform-origin:0 50%;">1217188</div>
<div class="g" style="left:554.93px;top:623.65px;font-size:9.6px;font-weight:normal;color:#3a3a3a;transform:scale(0.8685,1.08);transform-origin:0 50%;">2.04277367292565</div>
<div class="g" style="left:671.30px;top:623.65px;font-size:9.6px;font-weight:normal;color:#3a3a3a;transform:scale(0.9005,1.08);transform-origin:0 50%;">3/19/2024 8:14:14 AM</div>
<div class="g" style="left:193.90px;top:641.80px;font-size:9.6px;font-weight:normal;color:#3a3a3a;transform:scale(0.8685,1.08);transform-origin:0 50%;">cms_provider_drug_costs_star</div>
<div class="g" style="left:318.30px;top:641.80px;font-size:9.6px;font-weight:normal;color:#3a3a3a;transform:scale(0.8887,1.08);transform-origin:0 50%;">GE65 Tot Drug Cst (144)</div>
<div class="g" style="left:462.17px;top:641.80px;font-size:9.6px;font-weight:normal;color:#3a3a3a;transform:scale(0.8685,1.08);transform-origin:0 50%;">176220240</div>
<div class="g" style="left:556.17px;top:641.80px;font-size:9.6px;font-weight:normal;color:#3a3a3a;transform:scale(0.8685,1.08);transform-origin:0 50%;">2.04111068346303</div>
<div class="g" style="left:671.30px;top:641.80px;font-size:9.6px;font-weight:normal;color:#3a3a3a;transform:scale(0.9005,1.08);transform-origin:0 50%;">3/19/2024 8:14:14 AM</div>
<div class="g" style="left:193.90px;top:659.95px;font-size:9.6px;font-weight:normal;color:#3a3a3a;transform:scale(0.8685,1.08);transform-origin:0 50%;">cms_provider_drug_costs_star</div>
<div class="g" style="left:318.30px;top:659.95px;font-size:9.6px;font-weight:normal;color:#3a3a3a;transform:scale(0.8887,1.08);transform-origin:0 50%;">GE65 Tot Day Suply (143)</div>
<div class="g" style="left:471.44px;top:659.95px;font-size:9.6px;font-weight:normal;color:#3a3a3a;transform:scale(0.8685,1.08);transform-origin:0 50%;">2457004</div>
<div class="g" style="left:559.57px;top:659.95px;font-size:9.6px;font-weight:normal;color:#3a3a3a;transform:scale(0.8685,1.08);transform-origin:0 50%;">2.0262312109182</div>
<div class="g" style="left:671.30px;top:659.95px;font-size:9.6px;font-weight:normal;color:#3a3a3a;transform:scale(0.9005,1.08);transform-origin:0 50%;">3/19/2024 8:14:07 AM</div>
<div class="g" style="left:193.90px;top:678.10px;font-size:9.6px;font-weight:normal;color:#3a3a3a;transform:scale(0.8685,1.08);transform-origin:0 50%;">cms_provider_drug_costs_star</div>
<div class="g" style="left:318.30px;top:678.10px;font-size:9.6px;font-weight:normal;color:#3a3a3a;transform:scale(0.8887,1.08);transform-origin:0 50%;">GE65 Tot Clms (142)</div>
<div class="g" style="left:476.08px;top:678.10px;font-size:9.6px;font-weight:normal;color:#3a3a3a;transform:scale(0.8685,1.08);transform-origin:0 50%;">151836</div>
<div class="g" style="left:559.57px;top:678.10px;font-size:9.6px;font-weight:normal;color:#3a3a3a;transform:scale(0.8685,1.08);transform-origin:0 50%;">2.0251327636249</div>
<div class="g" style="left:671.30px;top:678.10px;font-size:9.6px;font-weight:normal;color:#3a3a3a;transform:scale(0.9005,1.08);transform-origin:0 50%;">3/19/2024 8:14:07 AM</div>
<div class="g" style="left:193.90px;top:696.25px;font-size:9.6px;font-weight:normal;color:#3a3a3a;transform:scale(0.8685,1.08);transform-origin:0 50%;">cms_provider_drug_costs_star</div>
<div class="g" style="left:318.30px;top:696.25px;font-size:9.6px;font-weight:normal;color:#3a3a3a;transform:scale(0.8887,1.08);transform-origin:0 50%;">GE65 Tot Benes (141)</div>
<div class="g" style="left:480.71px;top:696.25px;font-size:9.6px;font-weight:normal;color:#3a3a3a;transform:scale(0.8685,1.08);transform-origin:0 50%;">75532</div>
<div class="g" style="left:554.93px;top:696.25px;font-size:9.6px;font-weight:normal;color:#3a3a3a;transform:scale(0.8685,1.08);transform-origin:0 50%;">2.02466037062899</div>
<div class="g" style="left:671.30px;top:696.25px;font-size:9.6px;font-weight:normal;color:#3a3a3a;transform:scale(0.9005,1.08);transform-origin:0 50%;">3/19/2024 8:14:07 AM</div>
<div class="g" style="left:193.90px;top:714.40px;font-size:9.6px;font-weight:normal;color:#3a3a3a;transform:scale(0.8685,1.08);transform-origin:0 50%;">cms_provider_drug_costs_star</div>
<div class="g" style="left:318.30px;top:714.40px;font-size:9.6px;font-weight:normal;color:#3a3a3a;transform:scale(0.8887,1.08);transform-origin:0 50%;">GE65 Tot 30day Fills (140)</div>
<div class="g" style="left:471.44px;top:714.40px;font-size:9.6px;font-weight:normal;color:#3a3a3a;transform:scale(0.8685,1.08);transform-origin:0 50%;">1201564</div>
<div class="g" style="left:554.93px;top:714.40px;font-size:9.6px;font-weight:normal;color:#3a3a3a;transform:scale(0.8685,1.08);transform-origin:0 50%;">2.02422863384873</div>
<div class="g" style="left:671.30px;top:714.40px;font-size:9.6px;font-weight:normal;color:#3a3a3a;transform:scale(0.9005,1.08);transform-origin:0 50%;">3/19/2024 8:14:06 AM</div>
<div class="g" style="left:193.90px;top:732.55px;font-size:9.6px;font-weight:normal;color:#3a3a3a;transform:scale(0.8685,1.08);transform-origin:0 50%;">cms_provider_drug_costs_star</div>
<div class="g" style="left:318.30px;top:732.55px;font-size:9.6px;font-weight:normal;color:#3a3a3a;transform:scale(0.8887,1.08);transform-origin:0 50%;">GE65 Sprsn Flag (139)</div>
<div class="g" style="left:480.71px;top:732.55px;font-size:9.6px;font-weight:normal;color:#3a3a3a;transform:scale(0.8685,1.08);transform-origin:0 50%;">17120</div>
<div class="g" style="left:554.93px;top:732.55px;font-size:9.6px;font-weight:normal;color:#3a3a3a;transform:scale(0.8685,1.08);transform-origin:0 50%;">2.02344326427984</div>
<div class="g" style="left:671.30px;top:732.55px;font-size:9.6px;font-weight:normal;color:#3a3a3a;transform:scale(0.9005,1.08);transform-origin:0 50%;">3/19/2024 8:14:06 AM</div>
<div class="a" style="left:505.5px;top:417.7px;width:137.8px;height:55.7px;border:2.3px solid #dd5353"></div>
<div class="a" style="left:78.6px;top:756px;width:76.9px;height:22.3px;background:#fff;border-radius:0 0 4px 4px;box-shadow:0 1px 3px rgba(0,0,0,0.18)"></div>
<div class="t " style="left:12.5px;top:761.8px;color:#555;font-size:8.3px">Query1.dax</div>
<div class="t " style="left:83.6px;top:761.8px;font-weight:bold;color:#222;font-size:8.7px">Query2.dax*</div>
<div class="a" style="left:83.6px;top:772px;width:66.5px;height:2.3px;background:#3d8fd6;border-radius:1px"></div>
<svg style="left:0;top:0" width="1" height="1"><path d="M142.5 765.2 L148.9 770.6 M148.9 765.2 L142.5 770.6" stroke="#333" stroke-width="1.3"/></svg>
<div class="t " style="left:3.1px;top:790.6px;color:#4a4a4a;font-size:8.6px;transform:scaleX(0.9292) scaleY(1.05);transform-origin:0 50%">Ready</div>
</div></body></html>
